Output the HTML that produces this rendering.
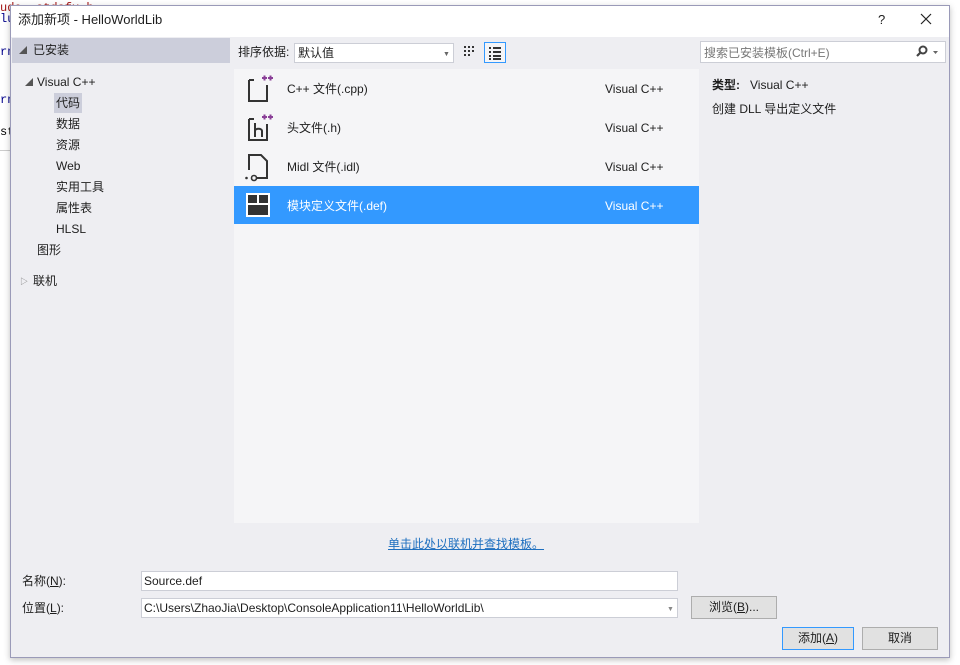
<!DOCTYPE html>
<html><head><meta charset="utf-8"><style>
*{margin:0;padding:0;box-sizing:border-box}
body{width:960px;height:665px;background:#fff;position:relative;overflow:hidden;font-family:"Liberation Sans","Noto Sans CJK SC",sans-serif;font-size:12px;color:#1e1e1e}
.a{position:absolute}
.code{font-family:"Liberation Mono",monospace;font-size:12px;color:#00008b;line-height:14px}
#dlg{left:10px;top:5px;width:940px;height:653px;background:#eeeef2;border:1px solid #9a9ab8;box-shadow:0 2px 6px rgba(0,0,0,.25)}
#title{left:0;top:0;width:938px;height:31px;background:#fff}
.t{white-space:nowrap;line-height:16px}
.sel{background:#3399ff;color:#fff}
.box{background:#fff;border:1px solid #ccced6}
.btn{background:#e1e1e1;border:1px solid #adadad;text-align:center;line-height:20px}
</style></head><body>
<div class="a code t" style="left:0;top:0;color:#a31515">ude &nbsp;stdafx.h</div>
<div class="a code t" style="left:0;top:11px">lu</div>
<div class="a code t" style="left:0;top:44px">rn</div>
<div class="a code t" style="left:0;top:92px">rn</div>
<div class="a code t" style="left:0;top:124px;color:#000">st</div>
<div class="a" style="left:0;top:150px;width:10px;height:1px;background:#ccc"></div>
<div id="dlg" class="a">
 <div id="title" class="a">
  <div class="a t" style="left:7px;top:6px;font-size:13px">添加新项 - HelloWorldLib</div>
  <div class="a t" style="left:867px;top:6px;font-size:13px">?</div>
  <svg class="a" style="left:909px;top:7px" width="12" height="12"><path d="M1 1l10 10M11 1L1 11" stroke="#222" stroke-width="1.2"/></svg>
 </div>
 <div class="a" style="left:1px;top:32px;width:218px;height:25px;background:#cccedb"></div>
 <div class="a t" style="left:8px;top:37px;font-size:8px;color:#555">◢</div>
 <div class="a t" style="left:22px;top:36px;font-size:12px">已安装</div>
 <div class="a t" style="left:14px;top:69px;font-size:8px;color:#555">◢</div>
 <div class="a t" style="left:26px;top:68px;font-size:12px">Visual C++</div>
 <div class="a" style="left:43px;top:87px;width:28px;height:20px;background:#cccedb"></div>
 <div class="a t" style="left:45px;top:89px;font-size:12px">代码</div>
 <div class="a t" style="left:45px;top:110px;font-size:12px">数据</div>
 <div class="a t" style="left:45px;top:131px;font-size:12px">资源</div>
 <div class="a t" style="left:45px;top:152px;font-size:12px">Web</div>
 <div class="a t" style="left:45px;top:173px;font-size:12px">实用工具</div>
 <div class="a t" style="left:45px;top:194px;font-size:12px">属性表</div>
 <div class="a t" style="left:45px;top:215px;font-size:12px">HLSL</div>
 <div class="a t" style="left:26px;top:236px;font-size:12px">图形</div>
 <div class="a t" style="left:9px;top:268px;font-size:8px;color:#777">▷</div>
 <div class="a t" style="left:22px;top:267px;font-size:12px">联机</div>
 <div class="a t" style="left:227px;top:38px;font-size:12px">排序依据:</div>
 <div class="a box" style="left:283px;top:37px;width:160px;height:20px"></div>
 <div class="a t" style="left:287px;top:39px;font-size:12px">默认值</div>
 <div class="a t" style="left:432px;top:41px;font-size:7px;color:#666">▼</div>
 <svg class="a" style="left:451px;top:38px" width="16" height="16"><g fill="#333"><rect x="2" y="2" width="2" height="2"/><rect x="6" y="2" width="2" height="2"/><rect x="10" y="2" width="2" height="2"/><rect x="2" y="6" width="2" height="2"/><rect x="6" y="6" width="2" height="2"/><rect x="10" y="6" width="2" height="2"/><rect x="2" y="10" width="2" height="2"/><rect x="6" y="10" width="2" height="2"/></g></svg>
 <div class="a" style="left:473px;top:36px;width:22px;height:21px;border:1px solid #3399ff;background:#f5f5f7"></div>
 <svg class="a" style="left:476px;top:39px" width="16" height="16"><g fill="#333"><rect x="2" y="2" width="2" height="2"/><rect x="6" y="2" width="8" height="2"/><rect x="2" y="6" width="2" height="2"/><rect x="6" y="6" width="8" height="2"/><rect x="2" y="10" width="2" height="2"/><rect x="6" y="10" width="8" height="2"/><rect x="2" y="13" width="2" height="2"/><rect x="6" y="13" width="8" height="2"/></g></svg>
 <div class="a" style="left:223px;top:63px;width:465px;height:454px;background:#f5f5f7"></div>
 <svg class="a" style="left:234px;top:68px" width="30" height="30"><path d="M4 6h5M4 6v21h18V11" fill="none" stroke="#333" stroke-width="2"/><path d="M17 4h5M19.5 1.5v5M23 4h5M25.5 1.5v5" stroke="#8a3f97" stroke-width="2"/></svg>
 <div class="a t" style="left:276px;top:75px;font-size:12px">C++ 文件(.cpp)</div>
 <div class="a t" style="left:594px;top:75px;font-size:12px">Visual C++</div>
 <svg class="a" style="left:234px;top:107px" width="30" height="30"><path d="M4 6h5M4 6v21h18V11" fill="none" stroke="#333" stroke-width="2"/><path d="M10 10v14M10 18c0-3 7-3 7 0v6" fill="none" stroke="#333" stroke-width="2"/><path d="M17 4h5M19.5 1.5v5M23 4h5M25.5 1.5v5" stroke="#8a3f97" stroke-width="2"/></svg>
 <div class="a t" style="left:276px;top:114px;font-size:12px">头文件(.h)</div>
 <div class="a t" style="left:594px;top:114px;font-size:12px">Visual C++</div>
 <svg class="a" style="left:232px;top:146px" width="30" height="30"><path d="M6 18V3h12l6 6v17H14" fill="none" stroke="#333" stroke-width="2"/><circle cx="11" cy="26" r="2.5" fill="none" stroke="#333" stroke-width="1.6"/><circle cx="3.5" cy="26" r="1.3" fill="#333"/></svg>
 <div class="a t" style="left:276px;top:153px;font-size:12px">Midl 文件(.idl)</div>
 <div class="a t" style="left:594px;top:153px;font-size:12px">Visual C++</div>
 <div class="a sel" style="left:223px;top:180px;width:465px;height:38px"></div>
 <svg class="a" style="left:234px;top:186px" width="26" height="26"><rect x="1" y="1" width="24" height="24" fill="#fff"/><rect x="3" y="3" width="9" height="8" fill="#333"/><rect x="14" y="3" width="9" height="8" fill="#333"/><rect x="3" y="13" width="20" height="10" fill="#333"/></svg>
 <div class="a t" style="left:276px;top:192px;font-size:12px;color:#fff">模块定义文件(.def)</div>
 <div class="a t" style="left:594px;top:192px;font-size:12px;color:#fff">Visual C++</div>
 <div class="a t" style="left:377px;top:530px;font-size:12px;color:#1e6fbf;text-decoration:underline">单击此处以联机并查找模板。</div>
 <div class="a box" style="left:689px;top:35px;width:246px;height:22px"></div>
 <div class="a t" style="left:693px;top:39px;font-size:12px;color:#777">搜索已安装模板(Ctrl+E)</div>
 <svg class="a" style="left:904px;top:39px" width="26" height="14"><circle cx="8" cy="5" r="3.5" fill="none" stroke="#444" stroke-width="2"/><path d="M6 7l-4 4" stroke="#444" stroke-width="2.2"/><path d="M18 6h5l-2.5 3z" fill="#666"/></svg>
 <div class="a t" style="left:701px;top:71px;font-size:12px"><b>类型:</b>&nbsp;&nbsp; Visual C++</div>
 <div class="a t" style="left:701px;top:95px;font-size:12px">创建 DLL 导出定义文件</div>
 <div class="a t" style="left:11px;top:567px;font-size:12px">名称(<u>N</u>):</div>
 <div class="a box" style="left:130px;top:565px;width:537px;height:20px"></div>
 <div class="a t" style="left:133px;top:567px;font-size:12px">Source.def</div>
 <div class="a t" style="left:11px;top:594px;font-size:12px">位置(<u>L</u>):</div>
 <div class="a box" style="left:130px;top:592px;width:537px;height:20px"></div>
 <div class="a t" style="left:133px;top:594px;font-size:12px">C:\Users\ZhaoJia\Desktop\ConsoleApplication11\HelloWorldLib\</div>
 <div class="a t" style="left:656px;top:596px;font-size:7px;color:#888">▼</div>
 <div class="a btn" style="left:680px;top:590px;width:86px;height:23px;font-size:12px">浏览(<u>B</u>)...</div>
 <div class="a btn" style="left:771px;top:621px;width:72px;height:23px;font-size:12px;border-color:#3399ff">添加(<u>A</u>)</div>
 <div class="a btn" style="left:851px;top:621px;width:76px;height:23px;font-size:12px">取消</div>
</div>
</body></html>
